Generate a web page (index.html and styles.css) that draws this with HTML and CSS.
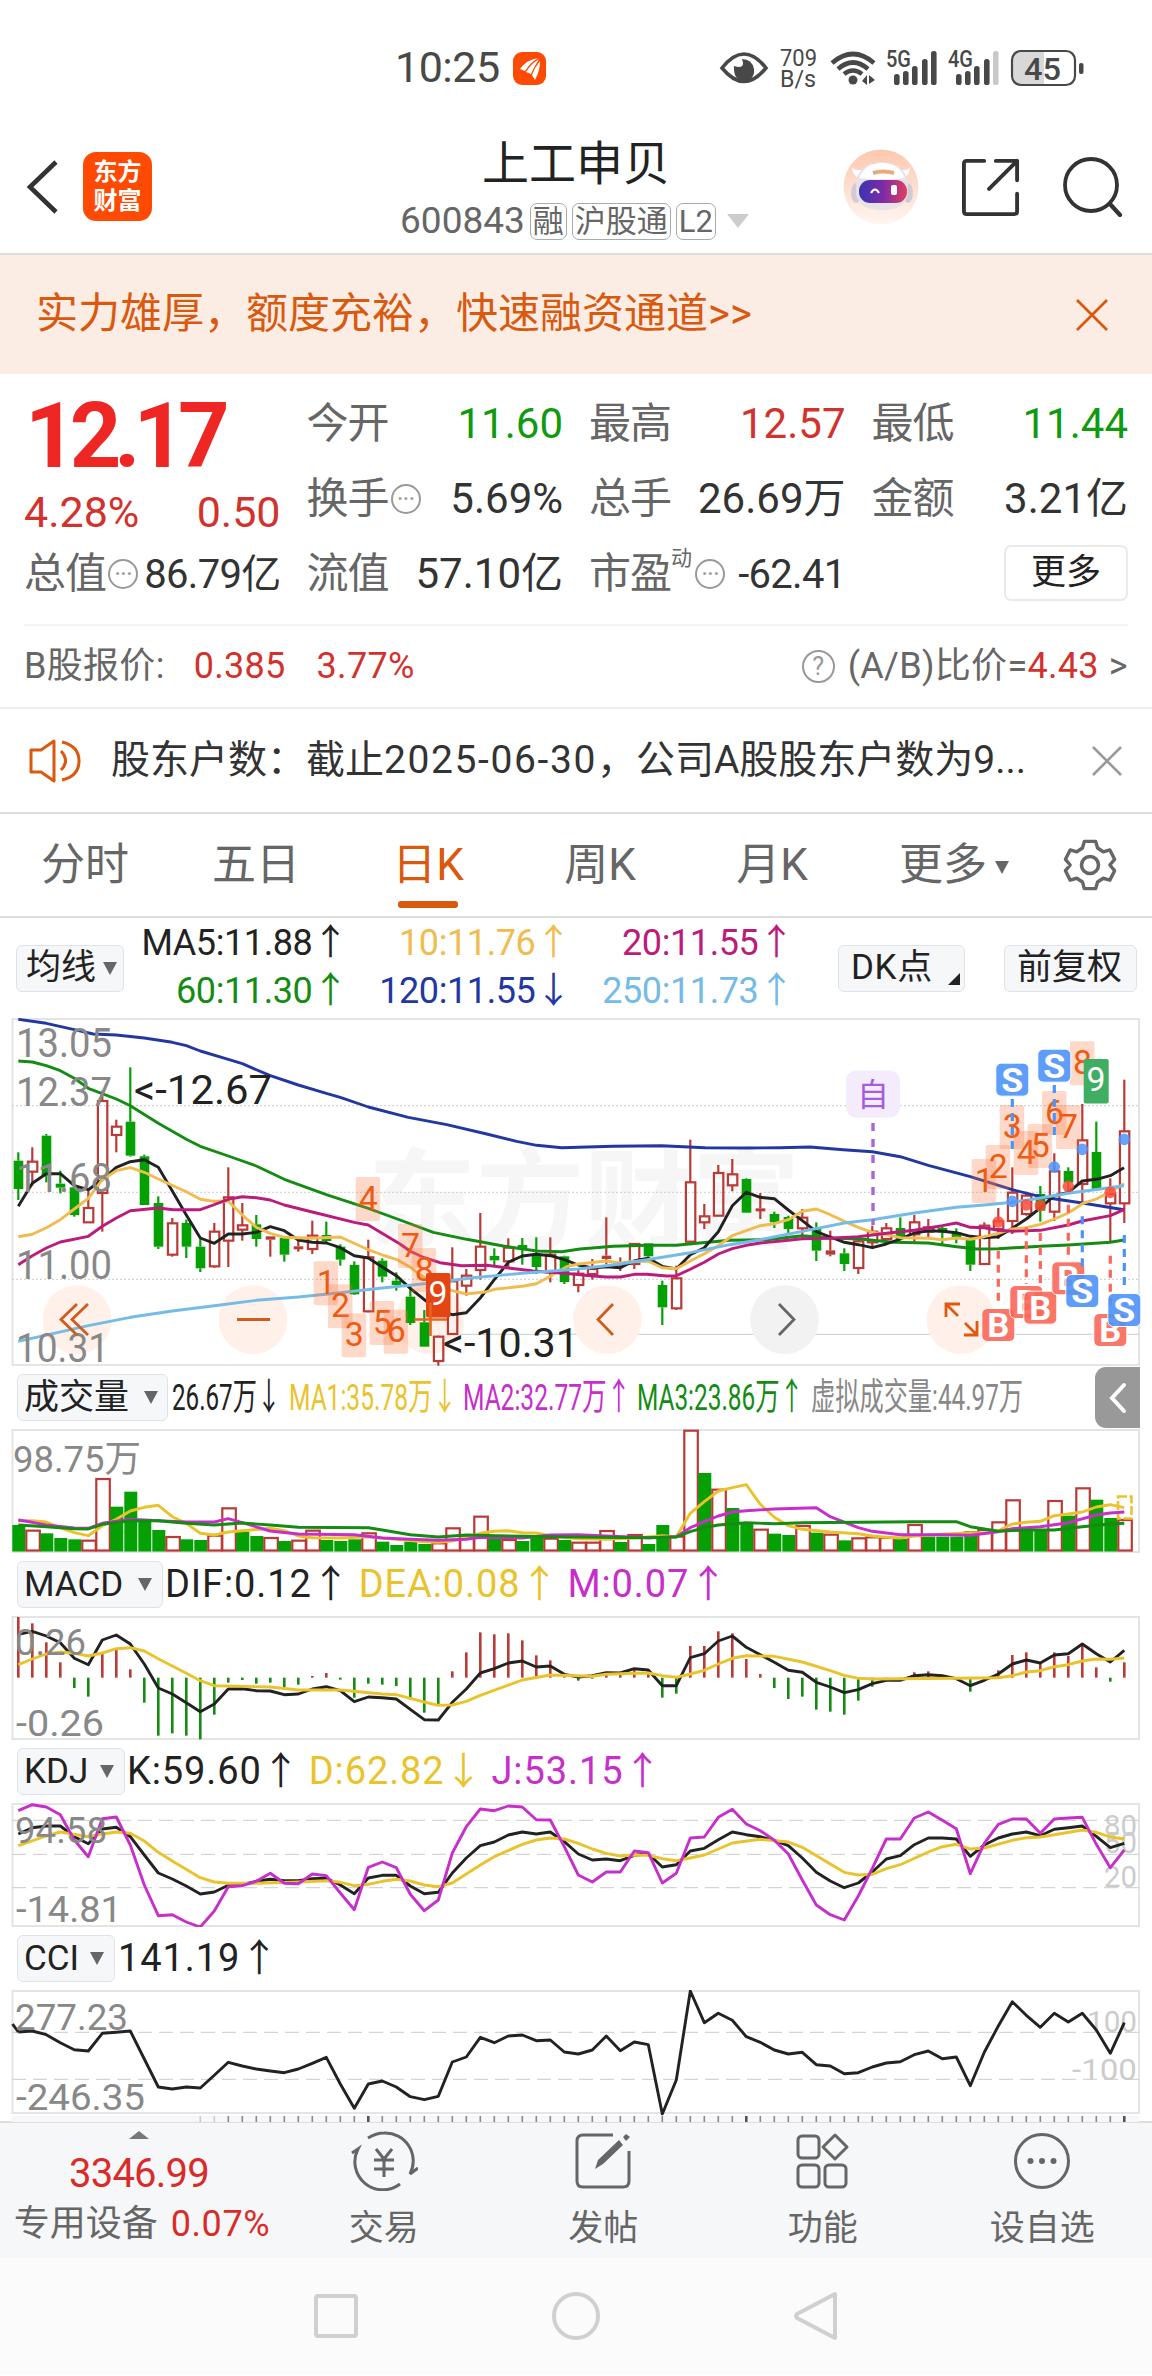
FILE: index.html
```
<!DOCTYPE html>
<html lang="zh-CN">

<head>
  <meta charset="utf-8">
  <meta name="viewport" content="width=device-width, initial-scale=1">
  <title>上工申贝 600843</title>
  <link rel="stylesheet" href="styles.css">
</head>

<body>
  <div class="status-bar">
    <span class="clock">10:25</span>
    <svg class="status-app" width="33" height="33" viewBox="0 0 33 33">
      <rect width="33" height="33" rx="9" fill="#fe4a03" />
      <path d="M7 17 Q13 8 25 6 Q17 11 12 19 Z M13 20 Q18 12 26 7 Q21 15 18 22 Z M19 23 Q22 15 27 9 Q27 19 22 28 Z" fill="#fff" />
    </svg>
    <svg class="status-icons" width="372" height="48" viewBox="0 0 372 48">
      <g fill="#484848">
        <path d="M3 24 Q25 -4 47 24 Q25 51 3 24 Z" fill="none" stroke="#484848" stroke-width="3.6" />
        <path d="M23 15 Q27 26 15 22 Q14 36 25 37 Q36 36 35 25 Q33 15 23 15 Z" />
        <text x="61" y="22" font-size="24" textLength="37" lengthAdjust="spacingAndGlyphs">709</text>
        <text x="61" y="43" font-size="24" textLength="36" lengthAdjust="spacingAndGlyphs">B/s</text>
        <circle cx="134" cy="36" r="4.5" />
        <path d="M148 31 v10 l-5 -4 z M150 31 v9 l6 -4 z" />
      </g>
      <g fill="none" stroke="#484848" stroke-width="4.6">
        <path d="M113 19 Q134 1 155 19" />
        <path d="M119 25 Q134 12 149 25" />
        <path d="M125 30 Q134 23 143 30" />
      </g>
      <g fill="#484848">
        <text x="167" y="23" font-size="23" font-weight="500" textLength="25" lengthAdjust="spacingAndGlyphs">5G</text>
        <text x="229" y="23" font-size="23" font-weight="500" textLength="25" lengthAdjust="spacingAndGlyphs">4G</text>
        <rect x="175" y="30" width="5.6" height="11" rx="2.6" />
        <rect x="184" y="27" width="5.6" height="14" rx="2.6" />
        <rect x="193" y="22" width="5.6" height="19" rx="2.6" />
        <rect x="203" y="15" width="5.6" height="26" rx="2.6" />
        <rect x="212" y="7" width="5.6" height="34" rx="2.6" />
        <rect x="237" y="30" width="5.6" height="11" rx="2.6" />
        <rect x="246" y="27" width="5.6" height="14" rx="2.6" />
        <rect x="255" y="22" width="5.6" height="19" rx="2.6" />
        <rect x="265" y="15" width="5.6" height="26" rx="2.6" />
        <rect x="274" y="7" width="5.6" height="34" rx="2.6" fill="#c8c8c8" />
      </g>
      <path d="M302 8 H325 V40 H302 Q294 40 294 32 V16 Q294 8 302 8 Z" fill="#d8d8d8" />
      <rect x="293" y="7" width="63" height="34" rx="9" fill="none" stroke="#484848" stroke-width="2.2" />
      <rect x="360" y="19" width="4.5" height="11" rx="2" fill="#484848" />
      <text x="305" y="35.5" font-size="32" font-weight="500" fill="#484848" textLength="37" lengthAdjust="spacingAndGlyphs">45</text>
    </svg>
  </div>

  <header class="header">
    <div class="header-left">
      <svg width="36" height="56" viewBox="0 0 36 56">
        <path d="M31 3 L5 28 L31 53" fill="none" stroke="#333" stroke-width="4.6" />
      </svg>
      <div class="logo">东方<br>财富</div>
    </div>
    <div class="header-title">
      <h1>上工申贝</h1>
      <div class="stock-code">
        <span>600843</span>
        <span class="tag">融</span>
        <span class="tag">沪股通</span>
        <span class="tag">L2</span>
        <i class="triangle triangle-light"></i>
      </div>
    </div>
    <div class="header-right">
      <svg width="76" height="76" viewBox="0 0 76 76">
        <defs>
          <linearGradient id="halo" x1="0" y1="0" x2="0" y2="1">
            <stop offset="0" stop-color="#fdc7ae" />
            <stop offset="1" stop-color="#fff6f1" />
          </linearGradient>
          <linearGradient id="visor" x1="0" y1="0" x2="1" y2="0">
            <stop offset="0" stop-color="#3a35b0" />
            <stop offset="0.5" stop-color="#7c2aa8" />
            <stop offset="1" stop-color="#e0405c" />
          </linearGradient>
        </defs>
        <circle cx="38" cy="38" r="37.5" fill="url(#halo)" />
        <path d="M9 18 Q9 26 16 29 L20 21 Q12 22 9 18 Z M67 18 Q67 26 60 29 L56 21 Q64 22 67 18 Z" fill="#fff" />
        <ellipse cx="13" cy="44" rx="5" ry="10" fill="#d2ccd2" />
        <ellipse cx="65" cy="44" rx="5" ry="10" fill="#d2ccd2" />
        <path d="M13 40 Q12 14 39 13 Q66 14 65 40 Q66 61 39 61 Q12 61 13 40 Z" fill="#e6e2e8" />
        <path d="M16 29 Q22 14 39 14 Q56 14 62 29 Q50 31 39 30 Q28 31 16 29 Z" fill="#fff" />
        <path d="M30 24 Q40 21 51 24" fill="none" stroke="#e5ab7c" stroke-width="4" />
        <rect x="16" y="31" width="48" height="23" rx="11" fill="url(#visor)" />
        <path d="M28 44 Q32 37 36 44" fill="none" stroke="#fff" stroke-width="2.2" />
        <rect x="48" y="36" width="6" height="10" rx="2" fill="#fff" />
      </svg>
      <svg width="58" height="58" viewBox="0 0 60 60">
        <path d="M23 3 H5 Q2 3 2 6 V55 Q2 58 5 58 H54 Q57 58 57 55 V37 M35 3 H57 V23 M57 3 L28 32" fill="none" stroke="#333" stroke-width="4" stroke-linecap="round" stroke-linejoin="round" />
      </svg>
      <svg width="60" height="60" viewBox="0 0 60 60">
        <circle cx="28" cy="28" r="26" fill="none" stroke="#333" stroke-width="3.8" />
        <path d="M47 47 L57 58" stroke="#333" stroke-width="4.2" stroke-linecap="round" />
      </svg>
    </div>
  </header>

  <div class="banner">
    <span>实力雄厚，额度充裕，快速融资通道&gt;&gt;</span>
    <svg width="32" height="32" viewBox="0 0 32 32">
      <path d="M1 1 L31 31 M31 1 L1 31" stroke="#d9590f" stroke-width="2.8" />
    </svg>
  </div>

  <section class="quote">
    <div class="quote-grid">
      <div class="price-cell">
        <div class="price">12.17</div>
        <div class="price-change"><span>4.28%</span><span>0.50</span></div>
      </div>
      <div class="cell"><label>今开</label><span class="down">11.60</span></div>
      <div class="cell"><label>最高</label><span class="up">12.57</span></div>
      <div class="cell"><label>最低</label><span class="down">11.44</span></div>
      <div class="cell"><label>换手<i class="dots">···</i></label><span>5.69%</span></div>
      <div class="cell"><label>总手</label><span>26.69万</span></div>
      <div class="cell"><label>金额</label><span>3.21亿</span></div>
      <div class="cell tight"><label>总值<i class="dots">···</i></label><span>86.79亿</span></div>
      <div class="cell"><label>流值</label><span>57.10亿</span></div>
      <div class="cell tight"><label>市盈<sup>动</sup><i class="dots">···</i></label><span>-62.41</span></div>
      <div class="cell cell-more"><button class="more-button">更多</button></div>
    </div>
    <div class="b-share">
      <span>B股报价:</span>
      <span class="up b-price">0.385</span>
      <span class="up b-percent">3.77%</span>
      <span class="ratio"><i class="question">?</i>(A/B)比价=<b>4.43</b><em>&gt;</em></span>
    </div>
  </section>

  <div class="notice">
    <svg width="54" height="46" viewBox="0 0 54 46">
      <path d="M3 12 H13 L26 3 V43 L13 34 H3 Z" fill="none" stroke="#d9590f" stroke-width="3" stroke-linejoin="round" />
      <path d="M33 13 Q42 23 33 32 M34 4 Q51 8 51 23 Q51 38 34 42" fill="none" stroke="#d9590f" stroke-width="3" />
    </svg>
    <span>股东户数：截止<b>2025-06-30</b>，公司A股股东户数为9...</span>
    <svg width="30" height="30" viewBox="0 0 30 30">
      <path d="M1 1 L29 29 M29 1 L1 29" stroke="#999" stroke-width="2.6" />
    </svg>
  </div>

  <nav class="tabs">
    <a>分时</a>
    <a>五日</a>
    <a class="active">日K</a>
    <a>周K</a>
    <a>月K</a>
    <a>更多<i class="triangle triangle-small"></i></a>
    <svg width="54" height="54" viewBox="0 0 54 54" fill="none" stroke="#666" stroke-width="3.6" stroke-linejoin="round">
      <path d="M21 2 H33 L35 9 L41 13 L48 11 L53 21 L48 27 L53 33 L48 43 L41 41 L35 45 L33 52 H21 L19 45 L13 41 L6 43 L1 33 L6 27 L1 21 L6 11 L13 13 L19 9 Z" transform="translate(1.5 1.5) scale(.945)" />
      <circle cx="27" cy="27" r="8.5" />
    </svg>
  </nav>

  <div class="ma-row">
    <button class="chip chip-ma">均线<i class="triangle triangle-small"></i></button>
    <div class="ma-grid">
      <span class="c-black">MA5:11.88↑</span>
      <span class="c-amber">10:11.76↑</span>
      <span class="c-pink">20:11.55↑</span>
      <span class="c-green">60:11.30↑</span>
      <span class="c-navy">120:11.55↓</span>
      <span class="c-sky">250:11.73↑</span>
    </div>
    <button class="chip chip-dk">DK点<i class="corner"></i></button>
    <button class="chip chip-adjust">前复权</button>
  </div>

  <main class="charts">
    <svg id="price" class="panel" width="1152" height="348" viewBox="0 -1 1152 348"></svg>

    <div class="panel-head">
      <button class="chip chip-volume">成交量<i class="triangle triangle-small"></i></button>
      <svg id="volumeHead" width="860" height="63"></svg>
      <div class="drawer">
        <svg width="18" height="32" viewBox="0 0 18 32">
          <path d="M15 3 L3 16 L15 29" fill="none" stroke="#fff" stroke-width="4" stroke-linecap="round" />
        </svg>
      </div>
    </div>
    <svg id="volume" class="panel" width="1152" height="124"></svg>

    <div class="panel-head">
      <button class="chip chip-macd">MACD<i class="triangle triangle-small"></i></button>
      <span class="c-black">DIF:0.12↑</span>
      <span class="c-yellow">DEA:0.08↑</span>
      <span class="c-magenta">M:0.07↑</span>
    </div>
    <svg id="macd" class="panel" width="1152" height="124"></svg>

    <div class="panel-head">
      <button class="chip chip-kdj">KDJ<i class="triangle triangle-small"></i></button>
      <span class="c-black">K:59.60↑</span>
      <span class="c-yellow">D:62.82↓</span>
      <span class="c-magenta">J:53.15↑</span>
    </div>
    <svg id="kdj" class="panel" width="1152" height="124"></svg>

    <div class="panel-head">
      <button class="chip chip-cci">CCI<i class="triangle triangle-small"></i></button>
      <span class="c-black">141.19↑</span>
    </div>
    <svg id="cci" class="panel" width="1152" height="132"></svg>
  </main>

  <footer class="toolbar">
    <div class="index-box">
      <i class="triangle-up"></i>
      <div class="index-value">3346.99</div>
      <div class="index-name">专用设备 <span>0.07%</span></div>
    </div>
    <div class="tool">
      <svg width="68" height="60" viewBox="0 0 68 60" fill="none" stroke="#666" stroke-width="3">
        <path d="M18 7 Q26 2 34 2 A28 28 0 0 1 60 43 L68 37 M50 53 A28 28 0 0 1 8 18 L2 22" />
        <path d="M26 18 L34 28 L42 18 M34 28 V46 M24 29 H44 M24 38 H44" />
      </svg>
      交易
    </div>
    <div class="tool">
      <svg width="60" height="60" viewBox="0 0 60 60" fill="none" stroke="#666" stroke-width="3">
        <path d="M40 4 H10 Q4 4 4 10 V50 Q4 56 10 56 H50 Q56 56 56 50 V20" />
        <path d="M22 38 L25 29 L46 9 L50 14 L30 33 Z M50 6 L53 3 L57 6 L53 10 Z" fill="#666" stroke="none" />
      </svg>
      发帖
    </div>
    <div class="tool">
      <svg width="60" height="60" viewBox="0 0 60 60" fill="none" stroke="#666" stroke-width="3">
        <rect x="5" y="5" width="21" height="22" rx="4" />
        <rect x="5" y="34" width="21" height="22" rx="4" />
        <rect x="32" y="34" width="21" height="22" rx="4" />
        <path d="M42 4 L54 16 L42 28 L30 16 Z" stroke-linejoin="round" />
      </svg>
      功能
    </div>
    <div class="tool">
      <svg width="60" height="60" viewBox="0 0 60 60">
        <circle cx="30" cy="30" r="26.5" fill="none" stroke="#666" stroke-width="3" />
        <g fill="#666">
          <circle cx="18.5" cy="30" r="3" />
          <circle cx="30" cy="30" r="3" />
          <circle cx="41.5" cy="30" r="3" />
        </g>
      </svg>
      设自选
    </div>
  </footer>

  <div class="system-nav">
    <svg width="50" height="50" viewBox="0 0 50 50"><rect x="5" y="5" width="40" height="40" rx="2" /></svg>
    <svg width="50" height="50" viewBox="0 0 50 50"><circle cx="25" cy="25" r="22" /></svg>
    <svg width="50" height="50" viewBox="0 0 50 50"><path d="M44 3 V47 L6 27 Q4 25 6 23 Z" stroke-linejoin="round" /></svg>
  </div>

  <script src="charts.js"></script>
</body>

</html>
```
FILE: styles.css
```
* {
  box-sizing: border-box;
}

body {
  margin: 0;
  width: 1152px;
  background-color: #fff;
  color: #333;
  font-family: Roboto, "Noto Sans CJK SC", sans-serif;
  line-height: 1.2;
}

svg {
  display: block;
  flex: none;
}

i,
em,
b {
  font-style: normal;
  font-weight: normal;
}

button {
  font-family: inherit;
  line-height: inherit;
  color: #222;
  padding: 0;
}

/* Status bar */
.status-bar {
  display: flex;
  align-items: center;
  height: 124px;
  padding: 12px 0 0 395px;
  color: #484848;
}

.clock {
  width: 118px;
  font-size: 43px;
  letter-spacing: -0.5px;
}

.status-icons {
  margin-left: 173px;
}

/* Header */
.header {
  display: grid;
  grid-template-columns: 1fr auto 1fr;
  height: 131px;
  border-bottom: 2px solid #ddd;
}

.header-left {
  display: flex;
  align-items: center;
  padding: 0 0 4px 25px;
}

.logo {
  margin-left: 22px;
  width: 69px;
  height: 69px;
  padding-top: 6px;
  border-radius: 13px;
  background-color: #fe4a03;
  color: #fff;
  font-size: 24px;
  font-weight: bold;
  line-height: 29px;
  text-align: center;
}

.header-title {
  text-align: center;
}

h1 {
  margin: 8px 0 0;
  font-size: 47px;
  font-weight: normal;
  line-height: 64px;
  color: #222;
}

.stock-code {
  display: flex;
  align-items: center;
  gap: 5px;
  height: 50px;
  margin-right: 3px;
  font-size: 37px;
  color: #666;
}

.tag {
  height: 37px;
  padding: 0 2px;
  border: 1.5px solid #aaa;
  border-radius: 7px;
  font-size: 31px;
  line-height: 35px;
}

.header-right {
  display: flex;
  align-items: center;
  justify-content: flex-end;
  gap: 43px;
  padding: 0 29px 3px 0;
}

.triangle {
  display: inline-block;
  border: 8px solid transparent;
  border-top: 13px solid #666;
  border-bottom: none;
}

.triangle-light {
  margin-left: 6px;
  border-width: 14px 11px 0;
  border-top-color: #ccc;
}

.triangle-small {
  vertical-align: middle;
  border-width: 13px 7px 0;
}

/* Promotion */
.banner {
  display: flex;
  align-items: center;
  justify-content: space-between;
  height: 119px;
  padding: 0 44px 0 36px;
  background-color: #fcede4;
  color: #d9590f;
  font-size: 42px;
}

/* Quote */
.quote {
  padding: 13px 24px 0;
  border-bottom: 2px solid #eee;
}

.quote-grid {
  display: grid;
  grid-template-columns: repeat(4, 1fr);
  grid-template-rows: repeat(3, 75px);
  column-gap: 26px;
  height: 239px;
  border-bottom: 2px solid #f3f3f3;
}

.price-cell {
  grid-row: span 2;
}

.price {
  padding-left: 1px;
  font-size: 90px;
  font-weight: 700;
  line-height: 99px;
  letter-spacing: -7px;
  color: #ee2624;
}

.price-change {
  display: flex;
  justify-content: space-between;
  font-size: 43px;
  line-height: 52px;
  color: #d2322d;
}

.cell {
  display: flex;
  align-items: center;
  justify-content: space-between;
  font-size: 42px;
  white-space: nowrap;
}

.cell label {
  display: flex;
  align-items: center;
  letter-spacing: -1px;
  color: #666;
}

.cell sup {
  align-self: flex-start;
  width: 22px;
  font-size: 21px;
  line-height: 18px;
}

.tight {
  font-size: 40px;
  letter-spacing: -0.7px;
}

.tight label {
  font-size: 42px;
}

.dots {
  width: 30px;
  height: 30px;
  margin-left: 2px;
  border: 2px solid #999;
  border-radius: 50%;
  font-size: 26px;
  line-height: 26px;
  text-align: center;
  color: #999;
}

.up {
  color: #d2322d;
}

.down {
  color: #109a10;
}

.cell-more {
  justify-content: flex-end;
}

.more-button {
  width: 124px;
  height: 56px;
  margin-top: -3px;
  border: 2px solid #eaeaea;
  border-radius: 7px;
  background-color: #fff;
  font-size: 35px;
}

.b-share {
  display: flex;
  align-items: center;
  height: 81px;
  font-size: 36px;
  letter-spacing: 0.3px;
  color: #666;
}

.b-price {
  margin-left: 29px;
}

.b-percent {
  margin-left: 31px;
}

.ratio {
  display: flex;
  align-items: center;
  margin-left: auto;
}

.ratio b {
  color: #d2322d;
}

.ratio em {
  margin-left: 10px;
}

.question {
  width: 33px;
  height: 33px;
  margin-right: 13px;
  border: 2.5px solid #999;
  border-radius: 50%;
  font-size: 25px;
  line-height: 29px;
  text-align: center;
  color: #999;
}

/* Notice */
.notice {
  display: flex;
  align-items: center;
  height: 105px;
  padding: 0 30px 0 28px;
  border-bottom: 2px solid #ddd;
  font-size: 39px;
}

.notice > span {
  flex: 1;
  margin-left: 29px;
}

.notice b {
  letter-spacing: 1.6px;
}

/* Period tabs */
.tabs {
  display: flex;
  align-items: center;
  height: 104px;
  padding-right: 35px;
  border-bottom: 2px solid #ddd;
  color: #666;
  font-size: 44px;
}

.tabs a {
  position: relative;
  flex: none;
  width: 172px;
  text-align: center;
  white-space: nowrap;
}

.tabs a:first-child {
  width: 170px;
}

.tabs a:nth-child(6) {
  width: 192px;
}

.tabs .triangle {
  margin-left: 8px;
}

.tabs svg {
  margin-left: auto;
}

.tabs .active {
  color: #d9590f;
}

.tabs .active::after {
  content: "";
  position: absolute;
  left: 56px;
  bottom: -17px;
  width: 60px;
  height: 7px;
  border-radius: 3px;
  background-color: #d9590f;
}

/* Moving averages */
.ma-row {
  display: flex;
  align-items: center;
  height: 100px;
  padding-left: 16px;
}

.ma-grid {
  display: grid;
  grid-template-columns: 224px 223px 223px;
  grid-template-rows: 48px 48px;
  align-items: center;
  text-align: right;
  font-size: 36px;
  letter-spacing: -0.4px;
}

.chip {
  display: flex;
  align-items: center;
  justify-content: space-between;
  height: 47px;
  padding: 0 8px 0 6px;
  border: 1.5px solid #dfe2e8;
  border-radius: 6px;
  background-color: #f6f7f9;
  font-size: 35px;
  white-space: nowrap;
}

.chip-ma {
  width: 108px;
  padding: 0 6px 0 9px;
}

.chip-dk {
  position: relative;
  width: 127px;
  margin-left: 44px;
  padding-left: 12px;
  letter-spacing: 0.6px;
}

.chip-adjust {
  width: 133px;
  margin-left: 39px;
  padding: 0 12px;
}

.corner {
  align-self: flex-end;
  margin: 0 -4px 6px 0;
  border-left: 12px solid transparent;
  border-bottom: 12px solid #222;
}

.c-black { color: #222; }
.c-amber { color: #f0bc50; }
.c-pink { color: #bb1c7c; }
.c-green { color: #148c14; }
.c-navy { color: #2238a0; }
.c-sky { color: #74bbe8; }
.c-yellow { color: #eac32c; }
.c-magenta { color: #c72fcb; }

/* Charts */
.charts {
  height: 1103px;
}

.panel-head {
  position: relative;
  display: flex;
  align-items: center;
  height: 63px;
  padding-left: 17px;
  font-size: 38px;
}

.panel-head > span {
  margin-right: 8px;
  letter-spacing: 0.9px;
}

.panel-head .chip {
  padding-left: 6px;
}

.panel-head .chip-volume {
  width: 151px;
  padding-right: 9px;
}

.panel-head .chip-macd {
  width: 146px;
  margin-right: 2px;
  padding-right: 10px;
}

.panel-head .chip-kdj {
  width: 108px;
  margin-right: 2px;
  padding-right: 10px;
}

.panel-head .chip-cci {
  width: 98px;
  margin-right: 3px;
  padding-right: 10px;
}

.drawer {
  position: absolute;
  top: 1px;
  right: 12px;
  display: flex;
  align-items: center;
  justify-content: center;
  width: 45px;
  height: 61px;
  border-radius: 11px 0 0 11px;
  background-color: #999;
}

/* Bottom bar */
.toolbar {
  display: flex;
  height: 137px;
  border-top: 2px solid #ddd;
  background-color: #f6f7f9;
  color: #666;
}

.index-box {
  width: 274px;
  padding: 8px 0 0 4px;
  text-align: center;
  color: #d92c2a;
}

.triangle-up {
  display: block;
  width: 20px;
  margin: 0 auto;
  border: 10px solid transparent;
  border-top: none;
  border-bottom: 8px solid #777;
}

.index-value {
  margin-top: 10px;
  font-size: 40px;
  line-height: 50px;
  letter-spacing: -0.8px;
}

.index-name {
  padding-left: 6px;
  font-size: 36px;
  line-height: 50px;
  white-space: nowrap;
  color: #666;
}

.index-name span {
  margin-left: 4px;
  letter-spacing: 0.6px;
  color: #d92c2a;
}

.tool {
  display: flex;
  flex-direction: column;
  align-items: center;
  width: 219.5px;
  padding-top: 8px;
  font-size: 35px;
  line-height: 76px;
}

.system-nav {
  display: flex;
  justify-content: center;
  gap: 190px;
  height: 117px;
  padding-top: 33px;
  background-color: #fbfbfb;
}

.system-nav svg {
  fill: none;
  stroke: #d0d0d0;
  stroke-width: 4;
}
```
FILE: charts.js
```
var RED = "#b93a36";
var GREEN = "#04a004";
var GRID = "#e4e4e4";
var STEP = 14;

function candleX(i) {
  return 18.3 + STEP * i;
}

function line(x1, y1, x2, y2, color, width, extra) {
  return '<line x1="' + x1 + '" y1="' + y1 + '" x2="' + x2 + '" y2="' + y2 + '" stroke="' + color +
    '" stroke-width="' + width + '" ' + (extra || "") + '/>';
}

function rect(x, y, w, h, attrs) {
  return '<rect x="' + x + '" y="' + y + '" width="' + w + '" height="' + h + '" ' + attrs + '/>';
}

function label(x, y, text, size, width, color, extra) {
  return '<text x="' + x + '" y="' + y + '" font-size="' + size + '" fill="' + color + '" textLength="' + width +
    '" lengthAdjust="spacingAndGlyphs" ' + (extra || "") + '>' + text + '</text>';
}

function polyline(points, color, width) {
  return '<polyline points="' + points.join(" ") + '" fill="none" stroke="' + color + '" stroke-width="' + (width || 2.9) +
    '" stroke-linejoin="round"/>';
}

// "index:value" pairs, value is converted with the scale of the panel
function series(text, toY, color, width) {
  var points = text.split(" ").map(function (pair) {
    var p = pair.split(":");
    return candleX(Number(p[0])).toFixed(1) + "," + toY(Number(p[1])).toFixed(1);
  });
  return polyline(points, color, width);
}

function dense(values, toY, color, width) {
  return polyline(values.map(function (v, i) {
    return candleX(i).toFixed(1) + "," + toY(v).toFixed(1);
  }), color, width);
}

function frame(top, height) {
  return rect(12.5, top, 1126.5, height, 'fill="none" stroke="' + GRID + '" stroke-width="2"');
}

function draw(id, html) {
  document.getElementById(id).innerHTML = html;
}

/* Price panel */
function priceY(v) {
  return v / 3 - 10;
}

// moving average points: x, y in thirds of a pixel
function average(values, color) {
  var points = [];
  for (var i = 0; i < values.length; i += 2) {
    points.push((values[i] / 3).toFixed(1) + "," + priceY(values[i + 1]).toFixed(1));
  }
  return polyline(points, color);
}

// high, body top, body bottom, low; g = falling, r = rising, f = rising and filled
var candles = [
  ["g", 430, 455, 540, 573], ["r", 415, 458, 488, 530], ["g", 375, 380, 500, 520], ["g", 485, 524, 536, 553],
  ["g", 510, 535, 618, 623], ["r", 545, 597, 640, 640], ["r", 245, 276, 552, 668], ["r", 332, 353, 378, 430],
  ["g", 175, 338, 440, 443], ["g", 437, 442, 588, 588], ["g", 562, 582, 713, 720], ["r", 627, 643, 737, 743],
  ["g", 632, 642, 713, 747], ["g", 690, 713, 778, 789], ["r", 642, 668, 772, 776], ["r", 475, 565, 695, 774],
  ["r", 582, 649, 662, 695], ["g", 618, 646, 690, 713], ["f", 682, 682, 692, 743], ["g", 685, 687, 737, 758],
  ["f", 695, 712, 719, 728], ["r", 635, 680, 720, 735], ["g", 638, 678, 696, 700], ["g", 706, 713, 752, 770],
  ["g", 757, 768, 856, 858], ["r", 692, 745, 907, 910], ["g", 748, 755, 803, 820], ["g", 790, 815, 828, 845],
  ["g", 830, 863, 942, 948], ["g", 903, 940, 1013, 1013], ["r", 980, 983, 1056, 1070], ["r", 715, 817, 975, 978],
  ["r", 780, 800, 830, 860], ["r", 612, 713, 783, 812], ["g", 718, 741, 754, 768], ["r", 688, 716, 757, 775],
  ["g", 687, 708, 716, 767], ["g", 685, 740, 774, 795], ["r", 685, 737, 790, 820], ["g", 740, 742, 819, 825],
  ["r", 780, 794, 828, 850], ["r", 750, 780, 795, 812], ["f", 625, 740, 750, 765], ["f", 745, 762, 770, 786],
  ["r", 703, 705, 765, 780], ["g", 703, 703, 742, 745], ["g", 815, 828, 895, 948], ["r", 770, 808, 898, 903],
  ["r", 392, 520, 698, 700], ["r", 585, 622, 640, 660], ["r", 468, 492, 620, 622], ["r", 450, 496, 529, 547],
  ["g", 508, 510, 611, 612], ["f", 552, 598, 605, 630], ["g", 608, 615, 640, 657], ["g", 620, 624, 660, 675],
  ["r", 600, 626, 658, 690], ["g", 640, 660, 725, 756], ["f", 665, 724, 737, 742], ["g", 718, 733, 765, 786],
  ["r", 685, 697, 777, 795], ["r", 650, 668, 700, 715], ["r", 642, 658, 690, 700], ["g", 625, 657, 690, 695],
  ["r", 618, 640, 676, 705], ["r", 630, 655, 668, 685], ["g", 653, 657, 670, 705], ["g", 658, 670, 685, 703],
  ["g", 692, 693, 767, 786], ["r", 640, 650, 765, 768], ["r", 597, 637, 660, 690], ["r", 475, 551, 636, 675],
  ["r", 548, 560, 615, 620], ["g", 531, 555, 605, 638], ["r", 433, 487, 608, 636], ["g", 475, 486, 520, 548],
  ["r", 285, 394, 525, 580], ["g", 338, 429, 540, 545], ["r", 508, 555, 583, 697], ["r", 212, 367, 583, 642]
];

var ma120 = [55, 31, 139, 43, 223, 62, 280, 75, 349, 78, 433, 87, 517, 100, 559, 110, 601, 126, 685, 151, 727, 164,
  811, 200, 895, 228, 979, 253, 1021, 265, 1105, 294, 1225, 325, 1340, 347, 1460, 375, 1550, 397, 1610, 409, 1685, 416,
  1840, 412, 1985, 410, 2115, 416, 2240, 417, 2340, 416, 2430, 414, 2530, 422, 2617, 428, 2701, 443, 2785, 469,
  2911, 503, 3037, 542, 3121, 563, 3247, 582, 3372, 602];
var ma60 = [55, 156, 97, 159, 139, 170, 181, 185, 223, 208, 265, 238, 349, 270, 391, 290, 475, 343, 559, 391, 601, 412,
  685, 441, 769, 471, 853, 511, 979, 557, 1105, 598, 1200, 633, 1300, 670, 1400, 691, 1510, 711, 1610, 726, 1685, 728,
  1740, 720, 1840, 712, 1940, 709, 2029, 709, 2090, 703, 2190, 694, 2300, 692, 2407, 680, 2491, 687, 2580, 690,
  2680, 700, 2785, 702, 2870, 713, 2930, 720, 2995, 719, 3121, 712, 3205, 708, 3331, 700, 3372, 693];
var ma20 = [55, 767, 97, 740, 139, 717, 181, 699, 265, 682, 307, 652, 349, 627, 391, 605, 475, 597, 520, 602, 601, 602,
  640, 588, 685, 571, 727, 563, 769, 566, 811, 573, 853, 588, 937, 609, 1063, 640, 1105, 648, 1200, 705, 1231, 727,
  1273, 746, 1320, 761, 1385, 770, 1460, 769, 1525, 777, 1600, 786, 1693, 793, 1780, 801, 1819, 804, 1861, 804,
  1903, 796, 1940, 796, 2000, 801, 2029, 800, 2071, 781, 2113, 760, 2155, 735, 2197, 719, 2239, 709, 2281, 702,
  2365, 694, 2407, 689, 2491, 688, 2575, 683, 2659, 673, 2743, 664, 2827, 650, 2869, 642, 2911, 655, 2953, 656,
  2995, 664, 3037, 667, 3121, 664, 3205, 648, 3247, 636, 3331, 620, 3372, 602];
var ma10 = [55, 683, 97, 676, 139, 656, 181, 632, 223, 600, 265, 568, 307, 512, 349, 485, 391, 476, 433, 490, 475, 510,
  559, 548, 601, 571, 640, 577, 685, 577, 727, 618, 769, 655, 811, 673, 853, 685, 937, 688, 1021, 684, 1105, 722,
  1147, 738, 1189, 751, 1231, 775, 1273, 806, 1315, 832, 1357, 845, 1399, 855, 1460, 848, 1483, 841, 1567, 832,
  1609, 824, 1651, 802, 1700, 773, 1735, 765, 1819, 756, 1861, 762, 1903, 757, 1945, 757, 1987, 776, 2029, 779,
  2071, 756, 2113, 734, 2155, 710, 2197, 680, 2239, 665, 2281, 650, 2323, 644, 2365, 632, 2407, 607, 2449, 600,
  2491, 617, 2533, 637, 2575, 655, 2617, 670, 2659, 677, 2701, 686, 2785, 688, 2827, 692, 2869, 687, 2911, 691,
  2953, 683, 2995, 673, 3037, 660, 3079, 656, 3121, 646, 3163, 630, 3205, 612, 3247, 584, 3289, 570, 3331, 548,
  3372, 524];
var ma5 = [55, 592, 97, 523, 139, 494, 181, 494, 223, 530, 265, 542, 307, 512, 349, 475, 391, 458, 433, 452, 475, 475,
  517, 546, 559, 618, 601, 687, 643, 703, 685, 675, 727, 675, 769, 670, 811, 653, 853, 665, 895, 693, 937, 700,
  979, 702, 1021, 716, 1063, 740, 1105, 747, 1147, 774, 1189, 800, 1231, 838, 1273, 872, 1315, 905, 1357, 917,
  1399, 911, 1441, 867, 1483, 812, 1525, 760, 1567, 741, 1609, 736, 1651, 740, 1693, 752, 1735, 768, 1777, 777,
  1819, 773, 1861, 776, 1903, 755, 1945, 748, 1987, 772, 2029, 780, 2071, 737, 2113, 716, 2155, 668, 2197, 590,
  2239, 550, 2281, 565, 2323, 569, 2365, 603, 2407, 635, 2449, 668, 2491, 684, 2533, 700, 2575, 707, 2617, 716,
  2659, 705, 2701, 690, 2743, 672, 2785, 665, 2827, 667, 2869, 671, 2911, 682, 2953, 686, 2995, 683, 3037, 658,
  3079, 630, 3121, 597, 3163, 560, 3205, 550, 3247, 516, 3289, 511, 3331, 500, 3372, 476];
var ma250 = [55, 997, 265, 950, 391, 925, 517, 906, 643, 890, 769, 874, 895, 864, 1021, 851, 1140, 838, 1273, 824,
  1420, 806, 1567, 793, 1735, 780, 1861, 765, 1987, 745, 2071, 731, 2190, 707, 2280, 692, 2407, 667, 2533, 642,
  2617, 632, 2743, 612, 2869, 595, 2953, 588, 3037, 580, 3121, 567, 3205, 553, 3372, 530];

// nine-turn counters: text, left, top
var counters = [
  [4, 1067, 504], [1, 941, 757], [2, 984, 826], [3, 1025, 913], [5, 1109, 876], [6, 1151, 902], [7, 1194, 645],
  [8, 1235, 717], [1, 2915, 450], [2, 2957, 408], [3, 2999, 288], [4, 3041, 366], [5, 3083, 345], [6, 3126, 246],
  [7, 3168, 288], [8, 3210, 97]
];

// trade marks: side, candle, badge centre, dashed line from / to, dot
var trades = [
  ["S", 71, 212, 270, 437, 577], ["S", 74, 170, 228, 395, 474], ["B", 70, 948, 725, 890, 639],
  ["B", 72, 879, 655, 825, 588], ["B", 73, 896, 672, 840, 590], ["B", 75, 808, 587, 755, 532],
  ["B", 78, 963, 740, 910, 550], ["S", 76, 846, 622, 790, 421], ["S", 79, 903, 678, 845, 391]
];

function drawCandle(c, i) {
  var x = candleX(i);
  var color = c[0] == "g" ? GREEN : RED;
  var top = priceY(c[2]), bottom = priceY(c[3]);
  var html = line(x, priceY(c[1]), x, top, color, 2.2) + line(x, bottom, x, priceY(c[4]), color, 2.2);
  if (c[0] == "r") {
    return html + rect(x - 4.4, top, 9.4, bottom - top, 'fill="none" stroke="' + color + '" stroke-width="2.2"');
  }
  return html + rect(x - 4.6, top, 9.6, Math.max(bottom - top, 3), 'fill="' + color + '"');
}

function drawCounter(c) {
  var x = c[1] / 3, y = priceY(c[2]);
  return rect(x, y, 24.5, 44, 'rx="2" fill="rgba(250,120,60,.28)"') +
    label(x + 3, y + 32.5, c[0], 34, 19, "#ee5a12");
}

function circleButton(cx, fill) {
  return '<circle cx="' + cx + '" cy="300.6" r="34.4" fill="' + fill + '"/>';
}

function strokePath(d, color, width) {
  return '<path d="' + d + '" fill="none" stroke="' + color + '" stroke-width="' + width + '"/>';
}

function drawPrice() {
  var html = frame(0, 346);
  html += label(368, 220, "东方财富", 108, 432, "#f6f6f6", 'font-weight="bold"');
  [86.7, 173.3, 260.3].forEach(function (y) {
    html += line(12, y, 1139, y, "#ccc", 1, 'stroke-dasharray="2 2"');
  });
  html += line(452, 315.3, 1139, 315.3, "#ccc", 1);

  html += circleButton(77, "#fff1e9") + circleButton(253, "#fff1e9") + circleButton(430, "#fff1e9") +
    circleButton(607.5, "#fff1e9") + circleButton(784.5, "#f2f2f2") + circleButton(961, "#fff1e9");

  html += candles.map(drawCandle).join("");
  html += average(ma120, "#2238a0") + average(ma60, "#148c14") + average(ma5, "#222") + average(ma10, "#f0bc50") +
    average(ma20, "#bb1c7c") + average(ma250, "#74bbe8");

  // pinned favourite date
  html += rect(846, 51.5, 54, 47, 'rx="10" fill="#f4ebfd"') + label(857, 87, "自", 32, 32, "#a45de0");
  html += line(873, 104, 873, 206, "#a666e4", 3.4, 'stroke-dasharray="8 8"');

  html += counters.map(drawCounter).join("");
  html += rect(426, 254, 24.5, 44.5, 'rx="2" fill="#e34513"') + label(428.5, 286, "9", 34, 19, "#fff");
  html += rect(1083.7, 40, 25, 44.5, 'rx="2" fill="#3fae62"') + label(1086.5, 72, "9", 34, 19, "#fff");

  trades.forEach(function (t) {
    var x = candleX(t[1]), y = priceY(t[2]);
    var color = t[0] == "S" ? "#4d94fa" : "#fa6858";
    html += line(x, priceY(t[3]), x, priceY(t[4]), color, 3.2, 'stroke-dasharray="8 6"');
    html += '<circle cx="' + x + '" cy="' + priceY(t[5]) + '" r="5.8" fill="' + (t[0] == "S" ? color : "#ff4a38") + '" opacity=".85"/>';
    html += rect(x - 16.5, y - 16.5, 33, 33, 'rx="5.5" fill="' + color + '" opacity=".9" stroke="#fff" stroke-width="1"');
    html += label(x - 11, y + 12, t[0], 34, 22, "#fff", 'font-weight="700"');
  });

  // scale and extremes
  html += label(16, 38, "13.05", 40, 96, "#888") + label(16, 86.5, "12.37", 40, 96, "#888") +
    label(16, 172.5, "11.68", 40, 96, "#888") + label(16, 260, "11.00", 40, 96, "#888") +
    label(16, 342.5, "10.31", 40, 93, "#888");
  html += label(134, 85, "&lt;-12.67", 40, 138, "#222") + label(443, 337.5, "&lt;-10.31", 40, 136, "#222");

  // chart controls
  html += strokePath("M77 285 L61 300.5 L77 316 M88 285 L72 300.5 L88 316", "#cf5c1c", 2.8);
  html += strokePath("M237 300.5 H270", "#cf5c1c", 3);
  html += strokePath("M414 300.5 H447 M430.5 284 V317", "#e8641c", 2.6);
  html += strokePath("M613 285 L598 300.5 L613 316", "#cf5c1c", 2.8);
  html += strokePath("M779 285 L794 300.5 L779 316", "#666", 2.8);
  html += strokePath("M946 298 V285 H960 M946 285 L958 297 M964 316 H977 V302 M977 316 L965 304", "#dd5a10", 2.8);
  draw("price", html);
}

/* Volume panel */
function volumeY(v) {
  return (v - 210) / 3 + 1;
}

var volumes = ("g495 r512 g520 g534 g538 r542 r357 g440 g395 g485 g510 r531 g538 g540 r527 r445 g515 g528 r534 g543 " +
  "r542 r512 g540 g543 g538 r520 g545 g555 g545 g552 r550 r505 r527 r470 g534 r540 g543 g534 r536 g540 " +
  "r548 r548 r513 g546 r525 g552 g495 r530 r212 g339 r389 g444 g488 r509 g521 g525 r498 g518 r524 g541 " +
  "r535 r532 r534 g537 r495 g530 g530 g530 g513 r510 r487 r421 g507 g510 r423 g467 r385 g419 g474 r480").split(" ");

function drawVolume() {
  var html = frame(1, 122);
  volumes.forEach(function (item, i) {
    var x = candleX(i), y = volumeY(Number(item.slice(1)));
    if (item[0] == "g") {
      html += rect(x - 6, y, 13, 122.5 - y, 'fill="' + GREEN + '"');
    } else {
      html += rect(x - 6, y, 13.5, 121.5 - y, 'fill="#fff" stroke="' + RED + '" stroke-width="2.2"');
    }
  });
  html += rect(1118, 67.5, 13.5, 22, 'fill="none" stroke="#eac32c" stroke-width="2.6" stroke-dasharray="9 2.5"');

  html += series("0:482 1:482 2:486 3:503 4:518 5:527 6:497 7:478 8:453 9:442 10:436 11:470 12:490 13:520 14:525 15:516 16:512 18:505 19:512 20:528 21:533 23:534 25:530 27:538 29:545 30:547 31:543 32:533 33:520 34:514 35:512 36:518 37:519 38:528 40:536 42:538 44:534 46:527 47:530 48:460 49:425 50:393 51:383 52:374 53:433 54:472 55:497 56:508 58:516 60:521 61:528 62:532 63:534 64:528 66:523 68:518 69:520 70:512 71:492 72:487 73:484 74:467 75:462 76:456 77:441 78:434 79:443", volumeY, "#eac32c");
  html += series("0:480 1:487 2:495 4:504 5:505 6:490 8:478 9:480 10:482 12:486 14:486 15:476 16:488 18:513 20:522 24:524 26:534 28:538 30:541 32:538 33:532 36:534 38:525 40:524 42:528 45:533 47:530 48:503 49:485 50:468 51:456 52:452 54:447 57:443 58:470 60:503 61:514 63:524 66:524 68:526 70:515 71:506 73:500 75:488 77:465 78:459 79:456", volumeY, "#c72fcb");
  html += series("0:495 2:500 4:506 5:507 6:493 8:482 10:482 12:490 14:495 16:489 18:495 20:502 25:503 26:510 28:524 30:531 32:525 35:528 38:530 45:533 47:531 48:515 49:503 50:495 52:488 54:491 56:488 60:487 64:485 67:485 68:500 70:514 72:510 74:510 76:500 78:492 79:490", volumeY, "#148c14");
  html += label(13, 43, "98.75万", 37, 128, "#888");
  draw("volume", html);

  draw("volumeHead",
    label(4, 43.5, "26.67万↓", 37, 109, "#222") + label(121, 43.5, "MA1:35.78万↓", 37, 168, "#eac32c") +
    label(295, 43.5, "MA2:32.77万↑", 37, 168, "#c72fcb") + label(469, 43.5, "MA3:23.86万↑", 37, 167, "#148c14") +
    label(643, 43.5, "虚拟成交量:44.97万", 37, 212, "#888"));
}

/* MACD panel */
function macdY(v) {
  return (v - 771) / 3 + 1;
}

var macdBars = [771, 790, 847, 907, 984, 1010, 880, 870, 928, 1028, 1127, 1120, 1127, 1138, 1064, 968, 960, 971, 968, 983,
  974, 948, 939, 959, 1013, 971, 974, 978, 1018, 1058, 1038, 934, 877, 817, 823, 820, 841, 886, 901, 943,
  962, 956, 938, 945, 925, 932, 1013, 1001, 858, 858, 814, 820, 897, 942, 984, 1017, 1010, 1049, 1055, 1064,
  1022, 980, 960, 956, 937, 934, 947, 955, 995, 960, 931, 885, 877, 910, 877, 888, 852, 922, 965, 907];
var dif = [823, 814, 828, 848, 895, 914, 840, 825, 852, 912, 984, 1002, 1028, 1055, 1032, 987, 986, 992, 993, 1004,
  1002, 987, 980, 992, 1025, 1011, 1013, 1017, 1048, 1079, 1080, 1027, 987, 939, 926, 909, 903, 921, 918, 943,
  951, 947, 938, 939, 926, 930, 977, 977, 893, 881, 843, 828, 862, 884, 907, 931, 937, 967, 981, 998,
  989, 971, 961, 961, 947, 944, 947, 956, 977, 961, 942, 912, 900, 909, 885, 881, 852, 881, 906, 871];

function drawMacd() {
  var html = frame(1, 122);
  macdBars.forEach(function (v, i) {
    html += line(candleX(i), macdY(953), candleX(i), macdY(v), v < 953 ? RED : "#148c14", 2.6);
  });
  html += dense(dif, macdY, "#222");
  html += series("0:914 1:897 2:882 3:876 4:880 5:888 6:879 7:866 8:863 9:873 10:896 12:940 13:962 14:977 18:981 20:990 23:990 26:1002 27:1004 28:1015 29:1026 30:1036 31:1035 32:1024 33:1006 36:960 38:945 41:949 42:943 44:940 45:939 46:947 47:952 48:942 49:931 50:912 51:895 52:887 54:889 56:906 58:932 59:946 60:955 61:957 67:955 70:953 71:947 72:936 73:932 74:920 75:914 76:903 77:897 78:898 79:894", macdY, "#eac32c");
  html += label(15, 39, "0.26", 37, 71, "#888") + label(16, 119.5, "-0.26", 37, 88, "#888");
  draw("macd", html);
}

/* KDJ panel */
function kdjY(v) {
  return (v - 222) / 3 + 1;
}

var kLine = [312, 293, 288, 288, 320, 341, 297, 292, 320, 375, 429, 447, 468, 492, 486, 466, 463, 454, 448, 452,
  452, 446, 445, 465, 491, 444, 436, 436, 468, 491, 487, 429, 384, 347, 336, 315, 306, 312, 306, 335,
  372, 390, 387, 392, 376, 371, 411, 404, 363, 355, 329, 306, 314, 320, 331, 347, 384, 427, 453, 473,
  459, 426, 387, 377, 344, 324, 324, 327, 379, 345, 324, 312, 306, 317, 298, 293, 288, 319, 353, 340];
var jLine = [242, 224, 231, 254, 330, 380, 266, 261, 345, 465, 557, 554, 576, 591, 543, 470, 467, 454, 430, 460,
  461, 432, 437, 489, 539, 412, 396, 413, 493, 542, 510, 369, 290, 237, 242, 228, 231, 269, 270, 350,
  435, 456, 426, 426, 363, 368, 459, 430, 324, 321, 262, 238, 282, 302, 331, 372, 450, 525, 554, 570,
  498, 415, 327, 327, 264, 246, 271, 296, 431, 340, 283, 267, 267, 310, 267, 264, 262, 343, 413, 360];

function drawKdj() {
  var html = frame(1, 122);
  [271, 373, 473].forEach(function (v) {
    html += line(12, kdjY(v), 1139, kdjY(v), "#d5d5d5", 1.4, 'stroke-dasharray="14 7"');
  });
  html += label(1104, 33, "80", 29, 33, "#ccc") + label(1104, 50, "50", 29, 33, "#ccc") + label(1104, 84, "20", 29, 33, "#ccc");
  html += dense(kLine, kdjY, "#222");
  html += series("0:347 2:318 3:306 5:320 6:312 7:306 8:310 9:333 10:367 11:393 13:443 14:456 15:460 17:460 20:456 22:452 23:457 24:467 25:463 26:454 27:448 28:453 29:465 30:470 31:459 32:432 33:405 34:380 36:343 37:330 38:324 39:327 40:340 41:357 42:370 43:378 44:375 45:376 46:386 47:392 48:384 49:375 51:339 53:328 55:336 56:352 58:402 59:427 60:435 61:433 62:416 63:404 65:366 66:350 67:343 68:357 69:354 71:331 72:323 73:321 74:314 76:300 77:307 78:321 79:327", kdjY, "#eac32c");
  html += dense(jLine, kdjY, "#c72fcb");
  html += label(15, 39.5, "94.58", 37, 92, "#888") + label(16, 119, "-14.81", 37, 106, "#888");
  draw("kdj", html);
}

/* CCI panel and time ruler */
function cciY(v) {
  return (v - 783) / 3 + 1;
}

var cci = [906, 903, 914, 938, 959, 963, 910, 907, 903, 987, 1071, 1077, 1071, 1074, 1036, 997, 1008, 1017, 1023, 1028,
  1017, 1000, 982, 1062, 1135, 1062, 1053, 1071, 1100, 1109, 1099, 996, 981, 922, 938, 918, 915, 932, 930, 966,
  972, 960, 918, 962, 936, 944, 1152, 1050, 783, 878, 850, 871, 920, 937, 960, 972, 967, 1004, 1008, 1031,
  1028, 1011, 999, 995, 974, 963, 986, 981, 1067, 967, 888, 815, 856, 892, 850, 876, 850, 900, 970, 878];

function drawCci() {
  var html = frame(1, 122);
  [907, 1048].forEach(function (v) {
    html += line(12, cciY(v), 1139, cciY(v), "#d5d5d5", 1.4, 'stroke-dasharray="14 7"');
  });
  html += label(1087, 42, "100", 29, 50, "#ccc") + label(1072, 90, "-100", 29, 65, "#ccc");
  html += line(12.5, 34, 18.3, 42, "#222", 2.9) + dense(cci, cciY, "#222");
  html += label(15, 39.5, "277.23", 37, 113, "#888") + label(16, 119.5, "-246.35", 37, 129, "#888");

  html += rect(12, 125.5, 1127, 7, 'fill="#f7f7f9"');
  for (var i = 13; i < 80; i++) {
    var major = i == 25 || i == 52 || i == 79;
    html += line(candleX(i), 126, candleX(i), 132, major ? "#555" : i < 15 ? "#ccc" : "#888", major ? 2.6 : 1.6);
  }
  draw("cci", html);
}

drawPrice();
drawVolume();
drawMacd();
drawKdj();
drawCci();
```
